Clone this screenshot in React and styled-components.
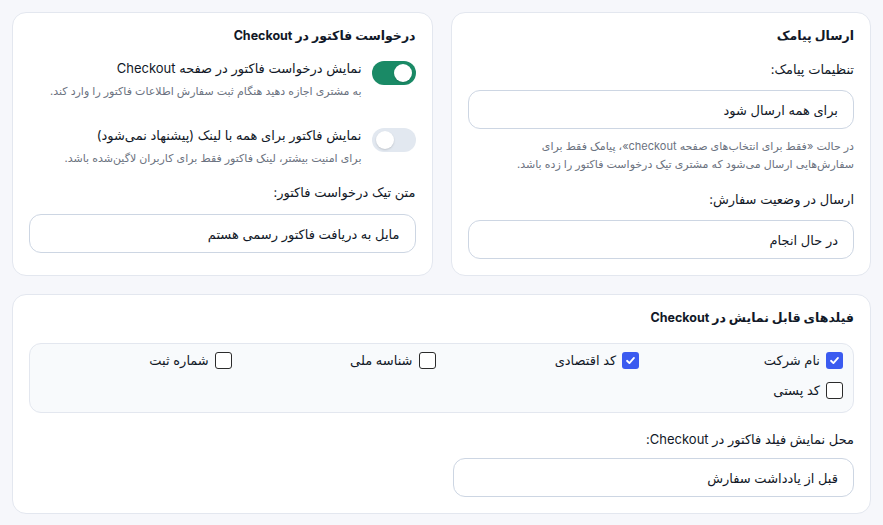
import React from "react";
import styled, { createGlobalStyle } from "styled-components";

const Global = createGlobalStyle`
  html, body { margin: 0; padding: 0; background: #f6f7fb; }
  body { font-family: Inter, "DejaVu Sans", sans-serif; color: #111827; }
  * { box-sizing: border-box; }
`;

const Page = styled.div`
  direction: rtl;
  padding: 12px;
  display: flex;
  flex-direction: column;
  gap: 18px;
  width: 883px;
`;

const TopRow = styled.div`
  display: grid;
  grid-template-columns: 1fr 1fr;
  gap: 18px;
`;

const Card = styled.section`
  background: #fff;
  border: 1px solid #e3e7ef;
  border-radius: 14px;
  padding: 14px 16px 16px;
  display: flex;
  flex-direction: column;
  min-height: ${(p) => p.$minH || "auto"};
`;

const Title = styled.h3`
  margin: 0 0 ${(p) => p.$mb || 12}px;
  font-size: 12.5px;
  font-weight: 700;
  line-height: 18px;
  color: #111827;
`;

const ToggleRow = styled.div`
  display: flex;
  align-items: flex-start;
  gap: 10px;
  margin-bottom: ${(p) => p.$mb || 0}px;
`;

const Switch = styled.span`
  flex: none;
  width: 44px;
  height: 24px;
  border-radius: 12px;
  background: ${(p) => (p.$on ? "#1a8a66" : "#e2e8f0")};
  position: relative;
  margin-top: 3px;
  &::after {
    content: "";
    position: absolute;
    top: 3px;
    ${(p) => (p.$on ? "right: 4px;" : "left: 4px;")}
    width: 18px;
    height: 18px;
    border-radius: 50%;
    background: #fff;
    box-shadow: 0 1px 2px rgba(0, 0, 0, 0.15);
  }
`;

const ToggleText = styled.div`
  display: flex;
  flex-direction: column;
  gap: 4px;
`;

const ToggleLabel = styled.div`
  font-size: 13px;
  line-height: 20px;
  color: #111827;
`;

const Help = styled.div`
  font-size: 11px;
  line-height: 18px;
  color: #6b7280;
  margin: ${(p) => p.$m || "0"};
`;

const FieldLabel = styled.div`
  font-size: 13px;
  line-height: 20px;
  color: #111827;
  margin: ${(p) => p.$m || "0 0 11px"};
`;

const Select = styled.div`
  height: 39px;
  border: 1px solid #cdd6e3;
  border-radius: 12px;
  display: flex;
  align-items: center;
  padding: 0 15px;
  font-size: 13px;
  color: #111827;
  background: #fff;
  width: ${(p) => p.$w || "100%"};
`;

const Group = styled.div`
  background: #f8fafc;
  border: 1px solid #e3e7ef;
  border-radius: 12px;
  padding: 4px 10px 10px;
  display: grid;
  grid-template-columns: repeat(4, 1fr);
  grid-auto-rows: 24px;
  column-gap: 12px;
  row-gap: 6px;
  margin-bottom: 16px;
`;

const CheckItem = styled.label`
  display: flex;
  align-items: center;
  gap: 6px;
  font-size: 13px;
  color: #111827;
`;

const Box = styled.span`
  width: 17px;
  height: 17px;
  flex: none;
  border-radius: 3px;
  border: ${(p) => (p.$on ? "none" : "1.5px solid #2b2b2b")};
  background: ${(p) => (p.$on ? "#3b5bf0" : "#fff")};
  display: flex;
  align-items: center;
  justify-content: center;
`;

const Check = ({ on, children }) => (
  <CheckItem>
    <Box $on={on}>
      {on && (
        <svg width="11" height="11" viewBox="0 0 12 12">
          <path d="M2.2 6.3 L4.8 8.8 L9.8 3.2" fill="none" stroke="#fff" strokeWidth="2" strokeLinecap="round" strokeLinejoin="round" />
        </svg>
      )}
    </Box>
    {children}
  </CheckItem>
);

export default function App() {
  return (
    <>
      <Global />
      <Page>
        <TopRow>
          <Card $minH="263px">
            <Title $mb={14}>ارسال پیامک</Title>
            <FieldLabel>تنظیمات پیامک:</FieldLabel>
            <Select>برای همه ارسال شود</Select>
            <Help $m="8px 0 16px">
              در حالت «فقط برای انتخاب‌های صفحه checkout»، پیامک فقط برای
              <br />
              سفارش‌هایی ارسال می‌شود که مشتری تیک درخواست فاکتور را زده باشد.
            </Help>
            <FieldLabel>ارسال در وضعیت سفارش:</FieldLabel>
            <Select>در حال انجام</Select>
          </Card>
          <Card $minH="263px">
            <Title $mb={13}>درخواست فاکتور در Checkout</Title>
            <ToggleRow $mb={25}>
              <Switch $on />
              <ToggleText>
                <ToggleLabel>نمایش درخواست فاکتور در صفحه Checkout</ToggleLabel>
                <Help>به مشتری اجازه دهید هنگام ثبت سفارش اطلاعات فاکتور را وارد کند.</Help>
              </ToggleText>
            </ToggleRow>
            <ToggleRow $mb={15}>
              <Switch />
              <ToggleText>
                <ToggleLabel>نمایش فاکتور برای همه با لینک (پیشنهاد نمی‌شود)</ToggleLabel>
                <Help>برای امنیت بیشتر، لینک فاکتور فقط برای کاربران لاگین‌شده باشد.</Help>
              </ToggleText>
            </ToggleRow>
            <FieldLabel $m="0 0 12px">متن تیک درخواست فاکتور:</FieldLabel>
            <Select>مایل به دریافت فاکتور رسمی هستم</Select>
          </Card>
        </TopRow>
        <Card>
          <Title $mb={16}>فیلدهای قابل نمایش در Checkout</Title>
          <Group>
            <Check on>نام شرکت</Check>
            <Check on>کد اقتصادی</Check>
            <Check>شناسه ملی</Check>
            <Check>شماره ثبت</Check>
            <Check>کد پستی</Check>
          </Group>
          <FieldLabel $m="0 0 9px">محل نمایش فیلد فاکتور در Checkout:</FieldLabel>
          <Select $w="401px">قبل از یادداشت سفارش</Select>
        </Card>
      </Page>
    </>
  );
}
